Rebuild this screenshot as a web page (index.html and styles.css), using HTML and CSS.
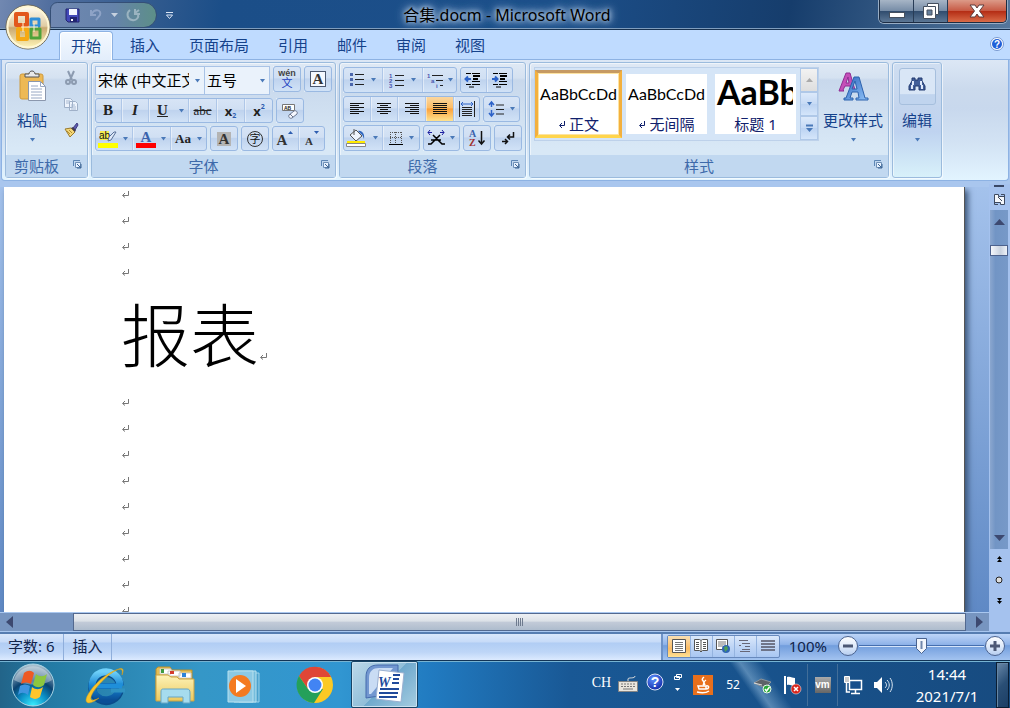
FILE: index.html
```html
<!DOCTYPE html>
<html lang="zh-CN">
<head>
<meta charset="utf-8">
<title>合集.docm - Microsoft Word</title>
<link rel="stylesheet" href="styles.css">
</head>
<body>
<svg class="defs" aria-hidden="true">
  <defs>
    <linearGradient id="gold" x1="0" y1="0" x2="0" y2="1"><stop offset="0" stop-color="#fffdf2"/><stop offset=".48" stop-color="#e0cba2"/><stop offset=".52" stop-color="#c9a870"/><stop offset="1" stop-color="#fff5b8"/></linearGradient>
    <linearGradient id="silver" x1="0" y1="0" x2="0" y2="1"><stop offset="0" stop-color="#ffffff"/><stop offset=".5" stop-color="#dfeafa"/><stop offset="1" stop-color="#b5cdf0"/></linearGradient>
    <linearGradient id="folder" x1="0" y1="0" x2="0" y2="1"><stop offset="0" stop-color="#fdf3b8"/><stop offset="1" stop-color="#ecc95e"/></linearGradient>
    <linearGradient id="blueA" x1="0" y1="0" x2="1" y2="1"><stop offset="0" stop-color="#2f67c0"/><stop offset="1" stop-color="#8fc2f7"/></linearGradient>
    <linearGradient id="ie" x1="0" y1="0" x2="0" y2="1"><stop offset="0" stop-color="#6fd0fa"/><stop offset=".5" stop-color="#1784d2"/><stop offset="1" stop-color="#0a4f97"/></linearGradient>
    <radialGradient id="orb" cx=".5" cy="1" r="1"><stop offset="0" stop-color="#3cf0ff"/><stop offset=".35" stop-color="#0b8ec6"/><stop offset=".6" stop-color="#0a4270"/><stop offset="1" stop-color="#b5c9d6"/></radialGradient>
    <radialGradient id="ball" cx=".4" cy=".3" r=".8"><stop offset="0" stop-color="#5d93ff"/><stop offset="1" stop-color="#0a1ea0"/></radialGradient>
  </defs>
  <symbol id="down" viewBox="0 0 7 4"><path d="M1 0h5L3.500 3.500z" fill="#4a79b8"/></symbol>
  <symbol id="launch" viewBox="0 0 9 9"><path d="M.5 6V.5H7" fill="none" stroke="#5d86b5"/><path d="M2.500 2.500h5v5h-5z" fill="#e8f2ff" stroke="#6e8fb5"/><path d="M4 4l4 4M8 4v4H4" fill="none" stroke="#3c6594"/></symbol>
  <symbol id="mark" viewBox="0 0 9 8"><path d="M7.500 1v4.500H2M4 3L1.500 5.500 4 7.500" fill="none" stroke="#777"/></symbol>
</svg>

<header class="titlebar">
  <button class="office" aria-label="Office">
    <svg viewBox="0 0 46 46"><circle cx="23" cy="23" r="22" fill="#e8e4d4" stroke="#6b6450"/><circle cx="23" cy="23" r="20.500" fill="url(#gold)" stroke="#fff7d4" stroke-width="2"/>
      <g fill="none" stroke-linejoin="round"><rect x="11" y="10" width="11" height="11" stroke="#e2571c" stroke-width="4"/><rect x="26" y="15" width="8" height="7" stroke="#2f8ed8" stroke-width="3"/><rect x="13" y="25" width="9" height="10" stroke="#f5a914" stroke-width="4"/><rect x="26" y="25" width="9" height="9" stroke="#4ea33a" stroke-width="3"/><path d="M18 18v10M16 23h17M29 19v9" stroke="#fff3d0" stroke-width="1"/></g></svg>
  </button>
  <div class="qat-area">
    <div class="qat">
      <button aria-label="保存"><svg width="16" height="16"><path d="M1 2h13v13H3l-2-2z" fill="#4349b8" stroke="#22256f"/><path d="M4 2h8v6H4z" fill="#f4f6ff"/><path d="M5 10h7v5H5z" fill="#22256f"/><path d="M6 12h2v2H6z" fill="#fff"/></svg></button>
      <button aria-label="撤销"><svg width="16" height="16"><path d="M3 3v5h5M3.500 7C7 1 14 3 12 8l-4 5" fill="none" stroke="#8ea3c6" stroke-width="2"/></svg></button>
      <button aria-label="撤销选项"><svg width="7" height="4"><path d="M0 0h7L3.500 4z" fill="#c6d1df"/></svg></button>
      <button aria-label="重复"><svg width="16" height="16"><path d="M10 2v5h5M10 6l4-3M5 3C1 6 2 12 7 13s7-3 6-6" fill="none" stroke="#9ab3c0" stroke-width="2"/></svg></button>
    </div>
    <button class="qat-more" aria-label="自定义快速访问工具栏"><svg width="9" height="9"><path d="M1 1.500h7M1.500 4h6l-3 3.500z" fill="none" stroke="#dbe6f5"/></svg></button>
  </div>
  <h1>合集.docm - Microsoft Word</h1>
  <div class="caption">
    <button aria-label="最小化"><svg width="20" height="20"><rect x="2.500" y="11.500" width="15" height="5" fill="#fff" stroke="#444f5e"/></svg></button>
    <button aria-label="还原"><svg width="20" height="20"><path d="M6.500 2.500h11v11h-3v4h-12v-12h4z" fill="#fff" stroke="#444f5e"/><path d="M6 9h5v5H6z" fill="#66809c" stroke="#444f5e"/><path d="M7 5.500h7.500v8" fill="none" stroke="#444f5e"/></svg></button>
    <button class="close" aria-label="关闭"><svg width="20" height="20"><path d="M3 4h5l2 3 2-3h5l-4.500 6 4.500 6h-5l-2-3-2 3H3l4.500-6z" fill="#fff" stroke="#5c3c3c"/></svg></button>
  </div>
</header>

<nav class="tabs">
  <button class="tab active">开始</button><button class="tab">插入</button><button class="tab">页面布局</button><button class="tab">引用</button><button class="tab">邮件</button><button class="tab">审阅</button><button class="tab">视图</button>
  <button class="help" aria-label="帮助"><svg width="14" height="14"><circle cx="7" cy="7" r="6.500" fill="#fff" stroke="#7798d0"/><circle cx="7" cy="7" r="5" fill="#2060d8"/><text x="7" y="11" text-anchor="middle" class="q">?</text></svg></button>
</nav>

<section class="ribbon">
  <div class="group">
    <div class="body clipboard">
      <button class="big"><svg width="32" height="34"><rect x="4" y="4" width="23" height="25" rx="2" fill="#eeb955" stroke="#cf9a3c"/><path d="M9 7V4h4c0-4 6-4 6 0h4v3z" fill="#e8e8e8" stroke="#555"/><path d="M12.500 11.500h12l5 5v14h-17z" fill="#fff" stroke="#8b97ad"/><path d="M24.500 11.500v5h5M15 16h7M15 19h11M15 22h11M15 25h11M15 28h11" fill="none" stroke="#98a8c4"/></svg><span>粘贴</span><svg class="dn"><use href="#down"/></svg></button>
      <div class="stack">
        <button aria-label="剪切"><svg width="16" height="16"><path d="M5 1l4 9M11 1L7 10" stroke="#8c9bb0" stroke-width="2"/><circle cx="5" cy="12" r="2" fill="none" stroke="#8c9bb0" stroke-width="2"/><circle cx="11" cy="12" r="2" fill="none" stroke="#8c9bb0" stroke-width="2"/></svg></button>
        <button aria-label="复制"><svg width="16" height="16"><path d="M1.500 2.500h6l2 2v7h-8zM6.500 5.500h6l2 2v7h-8z" fill="#edf3fc" stroke="#9fb0c8"/><path d="M3 5h4M3 7h3M8 9h4M8 11h5M8 13h5" stroke="#a9bad2"/></svg></button>
        <button aria-label="格式刷"><svg width="16" height="16"><path d="M14 1l1 2-3 5-2-2z" fill="#5d5bb0" stroke="#3d3b80"/><path d="M2 7l6-1 4 4-5 5z" fill="#f3d677" stroke="#9a7a2c"/><path d="M8 6l4 4 1-2-3-3z" fill="#443c50"/><path d="M4 9l3 3M6 8l3 3" stroke="#b6902f"/></svg></button>
      </div>
    </div>
    <div class="glabel"><span>剪贴板</span><button aria-label="剪贴板选项"><svg width="9" height="9"><use href="#launch"/></svg></button></div>
  </div>

  <div class="group">
    <div class="body rows font">
      <div class="row">
        <div class="combo"><div class="pick name"><select aria-label="字体"><option>宋体 (中文正文)</option></select><svg class="dn"><use href="#down"/></svg></div><div class="pick size"><select aria-label="字号"><option>五号</option></select><svg class="dn"><use href="#down"/></svg></div></div>
        <div class="strip"><button class="w28" aria-label="拼音指南"><svg width="20" height="24"><text x="10" y="9" text-anchor="middle" class="pinyin">wén</text><text x="10" y="20" text-anchor="middle" class="wen">文</text></svg></button></div>
        <div class="strip"><button class="w28" aria-label="字符边框"><svg width="18" height="18"><rect x="1.500" y="1.500" width="15" height="15" fill="#f4f8ff" stroke="#4b5870"/><text x="9" y="14" text-anchor="middle" class="serif-a">A</text></svg></button></div>
      </div>
      <div class="row">
        <div class="strip"><button class="w27 serif">B</button><button class="w27 serif it">I</button><button class="w40"><u class="serif">U</u><svg class="dn"><use href="#down"/></svg></button><button class="w28 strike">abc</button><button class="w28 script">x<sub>2</sub></button><button class="w28 script">x<sup>2</sup></button></div>
        <div class="strip"><button class="w28" aria-label="清除格式"><svg width="18" height="18"><path d="M1.500 2.500h12v6h-12z" fill="#fff" stroke="#777"/><text x="3" y="8" class="tiny">AB</text><path d="M8 13l5-4c2-1 4 1 3 3l-5 4c-2 1-4-1-3-3z" fill="#f6f8ff" stroke="#69748c"/><path d="M9 12l3 3" stroke="#69748c"/></svg></button></div>
      </div>
      <div class="row">
        <div class="strip"><button class="w38" aria-label="突出显示"><svg width="21" height="20"><path d="M2 2h9v9H2z" fill="#f6ee52"/><text x="1" y="10" class="ab">ab</text><path d="M18 3l-5 8-3 1 1-4 5-5z" fill="#dfe9f8" stroke="#587098"/><path d="M0 14h20v5H0z" fill="#ff0"/></svg><svg class="dn"><use href="#down"/></svg></button><button class="w38" aria-label="字体颜色"><svg width="21" height="22"><text x="10" y="14" text-anchor="middle" class="colour-a">A</text><path d="M0 15h20v5H0z" fill="red"/></svg><svg class="dn"><use href="#down"/></svg></button><button class="w36 case">Aa<svg class="dn"><use href="#down"/></svg></button></div>
        <div class="strip"><button class="w28" aria-label="字符底纹"><svg width="16" height="16"><path d="M1 1h14v14H1z" fill="#b4b4b4"/><text x="8" y="13" text-anchor="middle" class="serif-a">A</text></svg></button></div>
        <div class="strip"><button class="w28" aria-label="带圈字符"><svg width="18" height="18"><circle cx="9" cy="9" r="7.500" fill="none" stroke="#333"/><text x="9" y="13" text-anchor="middle" class="ring">字</text></svg></button></div>
        <div class="strip"><button class="w27" aria-label="增大字体"><svg width="20" height="20"><text x="7" y="16" text-anchor="middle" class="serif-a">A</text><path d="M13 5h5l-2.500-3z" fill="#2d5db0"/></svg></button><button class="w26" aria-label="缩小字体"><svg width="20" height="20"><text x="7" y="16" text-anchor="middle" class="small-a">A</text><path d="M12 2h5l-2.500 3z" fill="#2d5db0"/></svg></button></div>
      </div>
    </div>
    <div class="glabel"><span>字体</span><button aria-label="字体选项"><svg width="9" height="9"><use href="#launch"/></svg></button></div>
  </div>

  <div class="group">
    <div class="body rows para">
      <div class="row">
        <div class="strip"><button class="w40" aria-label="项目符号"><svg width="16" height="16"><path d="M1 1h3v3H1zM1 6h3v3H1zM1 11h3v3H1z" fill="#4a66ac"/><path d="M6 2.500h9M6 7.500h9M6 12.500h9" stroke="#222"/></svg><svg class="dn"><use href="#down"/></svg></button><button class="w40" aria-label="编号"><svg width="16" height="17"><text x="0" y="6" class="num">1</text><text x="0" y="11" class="num">2</text><text x="0" y="16" class="num">3</text><path d="M6 3.500h9M6 8.500h9M6 13.500h9" stroke="#222"/></svg><svg class="dn"><use href="#down"/></svg></button><button class="w34" aria-label="多级列表"><svg width="17" height="17"><text x="0" y="6" class="num">1</text><text x="4" y="11" class="num">a</text><text x="9" y="16" class="num">i</text><path d="M5 3.500h11M9 8.500h7M13 13.500h3" stroke="#222"/></svg><svg class="dn"><use href="#down"/></svg></button></div>
        <div class="strip"><button class="w27" aria-label="减少缩进"><svg width="18" height="16"><path d="M2 1.500h5M8 1.500h8M8 9.500h8M2 12.500h5M8 12.500h8M5 15h5" stroke="#000"/><path d="M9 4h7M9 7h5" stroke="#000" stroke-width="2"/><path d="M7 7H2M4 4.500L1.500 7 4 9.500" fill="none" stroke="#2c62c8" stroke-width="2"/></svg></button><button class="w26" aria-label="增加缩进"><svg width="18" height="16"><path d="M2 1.500h5M8 1.500h8M8 9.500h8M2 12.500h5M8 12.500h8M5 15h5" stroke="#000"/><path d="M9 4h7M9 7h5" stroke="#000" stroke-width="2"/><path d="M1 7h5M4 4.500L6.500 7 4 9.500" fill="none" stroke="#2c62c8" stroke-width="2"/></svg></button></div>
      </div>
      <div class="row">
        <div class="strip"><button class="w28" aria-label="左对齐"><svg width="16" height="14"><path d="M1 1.500h14M1 3.500h9M1 5.500h14M1 7.500h9M1 9.500h14M1 11.500h9" stroke="#111"/></svg></button><button class="w27" aria-label="居中"><svg width="16" height="14"><path d="M1 1.500h14M4 3.500h8M1 5.500h14M4 7.500h8M1 9.500h14M4 11.500h8" stroke="#111"/></svg></button><button class="w28" aria-label="右对齐"><svg width="16" height="14"><path d="M1 1.500h14M6 3.500h9M1 5.500h14M6 7.500h9M1 9.500h14M6 11.500h9" stroke="#111"/></svg></button><button class="w28 on" aria-label="两端对齐"><svg width="16" height="14"><path d="M1 1.500h14M1 3.500h14M1 5.500h14M1 7.500h14M1 9.500h14M1 11.500h14" stroke="#111"/></svg></button><button class="w26" aria-label="分散对齐"><svg width="18" height="16"><path d="M1.500 0v16M16.500 0v16M4 6.500h10M4 8.500h10M4 10.500h10M4 12.500h10M4 14.500h10" stroke="#222"/><path d="M3 3h12M5 1L3 3l2 2M13 1l2 2-2 2" fill="none" stroke="#2c62c8"/></svg></button></div>
        <div class="strip"><button class="w37" aria-label="行距"><svg width="17" height="18"><path d="M3.500 2v5M3.500 10v6M1 5l2.500-3L6 5M1 13l2.500 3L6 13" fill="none" stroke="#2c62c8" stroke-width="1.500"/><path d="M8 5h8M8 9.500h8M8 14h8" stroke="#222"/></svg><svg class="dn"><use href="#down"/></svg></button></div>
      </div>
      <div class="row">
        <div class="strip"><button class="w40" aria-label="底纹"><svg width="21" height="20"><path d="M4 7l6-5 6 6-6 5z" fill="#eff4fc" stroke="#555"/><path d="M8 1v6" stroke="#555"/><path d="M12 3c4-1 7 3 6 8-1-2-1-4-3-5z" fill="#2f66bd"/><path d="M1 13h18v2H1z" fill="#ffea00"/><path d="M.5 15.500h19v3H.5z" fill="#fff" stroke="#888"/></svg><svg class="dn"><use href="#down"/></svg></button><button class="w37" aria-label="边框"><svg width="16" height="16"><path d="M2 2.500h12M2 7.500h12M2.500 2v11M7.500 2v11M13.500 2v11" stroke="#555" stroke-dasharray="1 1"/><path d="M1 14.500h14" stroke="#000"/></svg><svg class="dn"><use href="#down"/></svg></button></div>
        <div class="strip"><button class="w37" aria-label="中文版式"><svg width="18" height="18"><path d="M1 15h3L13 6M6 6l9 9h3M4 11h10" fill="none" stroke="#000" stroke-width="1.500"/><path d="M1 3.500h4M3 1L1 3.500 3 6M17 3.500h-4M15 1l2 2.500L15 6" fill="none" stroke="#1d1fa0"/></svg><svg class="dn"><use href="#down"/></svg></button></div>
        <div class="strip"><button class="w28" aria-label="排序"><svg width="18" height="22"><text x="1" y="10" class="az">A</text><text x="1" y="19" class="az z">Z</text><path d="M13.500 4v12M10.500 13.500l3 3.500 3-3.500" fill="none" stroke="#111" stroke-width="1.500"/></svg></button></div>
        <div class="strip"><button class="w28" aria-label="显示编辑标记"><svg width="16" height="16"><path d="M13.500 2v5H8M10 4.500L7.500 7 10 9.500M2 11.500h5M5 9l2.500 2.500L5 14" fill="none" stroke="#111" stroke-width="1.500"/></svg></button></div>
      </div>
    </div>
    <div class="glabel"><span>段落</span><button aria-label="段落选项"><svg width="9" height="9"><use href="#launch"/></svg></button></div>
  </div>

  <div class="group">
    <div class="body styles">
      <div class="gallery">
        <button class="style chosen"><span class="sample">AaBbCcDd</span><span class="sname"><svg width="8" height="8"><path d="M6.500 1v4.500H2M4 3L1.500 5.500 4 8" fill="none" stroke="#10206c"/></svg>正文</span></button>
        <button class="style"><span class="sample">AaBbCcDd</span><span class="sname"><svg width="8" height="8"><path d="M6.500 1v4.500H2M4 3L1.500 5.500 4 8" fill="none" stroke="#10206c"/></svg>无间隔</span></button>
        <button class="style"><span class="sample h">AaBb</span><span class="sname">标题 1</span></button>
        <div class="spin"><button class="off" aria-label="上一行"><svg width="7" height="4"><path d="M0 4h7L3.500 0z" fill="#aaa"/></svg></button><button aria-label="下一行"><svg class="dn"><use href="#down"/></svg></button><button aria-label="更多样式"><svg width="9" height="9"><path d="M1 1.500h7" stroke="#4a79b8" stroke-width="2"/><path d="M1 4h7L4.500 8z" fill="#4a79b8"/></svg></button></div>
      </div>
      <button class="big"><svg width="32" height="34"><path d="M2 21L9 3h4l5 17h-4l-1-4H8l-2 4 1 1zM9 13h3l-1-6z" fill="#c44fb8" stroke="#8f2d92"/><path d="M7 30v-2h2L17 7h5l6 21h3v2H19v-2h3l-1-6h-6l-2 6h3v2zM15 19h5l-2-8z" fill="url(#blueA)" stroke="#2d62ad"/></svg><span>更改样式</span><svg class="dn"><use href="#down"/></svg></button>
    </div>
    <div class="glabel"><span>样式</span><button aria-label="样式选项"><svg width="9" height="9"><use href="#launch"/></svg></button></div>
  </div>

  <div class="group edit">
    <button class="big"><span class="tile"><svg width="18" height="16"><path d="M4 2h3v2h3V2h4v3l3 5v4h-6v-4H7v4H1v-4l3-5z" fill="#425f9a" stroke="#233b70"/><path d="M5 5v4M13 5v4M3 12h2M13 12h2M3 10h2M13 10h2" stroke="#dfe9fb" stroke-width="2"/></svg></span><span>编辑</span><svg class="dn"><use href="#down"/></svg></button>
  </div>
</section>

<main class="work">
  <div class="canvas">
    <article class="page">
      <p><svg class="mk"><use href="#mark"/></svg></p><p><svg class="mk"><use href="#mark"/></svg></p><p><svg class="mk"><use href="#mark"/></svg></p><p><svg class="mk"><use href="#mark"/></svg></p>
      <h2>报表<svg class="mk"><use href="#mark"/></svg></h2>
      <p><svg class="mk"><use href="#mark"/></svg></p><p><svg class="mk"><use href="#mark"/></svg></p><p><svg class="mk"><use href="#mark"/></svg></p><p><svg class="mk"><use href="#mark"/></svg></p><p><svg class="mk"><use href="#mark"/></svg></p><p><svg class="mk"><use href="#mark"/></svg></p><p><svg class="mk"><use href="#mark"/></svg></p><p><svg class="mk"><use href="#mark"/></svg></p><p><svg class="mk"><use href="#mark"/></svg></p>
    </article>
  </div>
  <div class="vscroll">
    <div class="split"></div>
    <button aria-label="标尺"><svg width="13" height="13"><path d="M1.500 1.500h4v2h6v8h-4v-2h-6z" fill="#f4f7fc" stroke="#3e4a60"/><path d="M5 4l4 4M8 1.500h3.500v3M1.500 8v3.500H5" fill="none" stroke="#3e4a60"/></svg></button>
    <div class="vtrack"><button aria-label="向上滚动"><svg width="11" height="6"><path d="M0 6h11L5.500 0z" fill="#3d4970"/></svg></button><div class="vthumb"></div><button class="end" aria-label="向下滚动"><svg width="11" height="6"><path d="M0 0h11L5.500 6z" fill="#3d4970"/></svg></button></div>
    <div class="browse">
      <button aria-label="前一页"><svg width="7" height="8"><path d="M1 4l2.500-3L6 4zM1 7l2.500-3L6 7z" fill="#000"/></svg></button>
      <button aria-label="选择浏览对象"><svg width="8" height="8"><circle cx="4" cy="4" r="3" fill="#ddd" stroke="#222"/></svg></button>
      <button aria-label="下一页"><svg width="7" height="8"><path d="M1 1l2.500 3L6 1zM1 4l2.500 3L6 4z" fill="#000"/></svg></button>
    </div>
  </div>
  <div class="hscroll"><button aria-label="向左滚动"><svg width="7" height="12"><path d="M7 0v12L0 6z" fill="#3d4970"/></svg></button><div class="hthumb"><svg width="8" height="8"><path d="M.5 0v8M2.500 0v8M4.500 0v8M6.500 0v8" stroke="#6f7b8e"/></svg></div><button class="right" aria-label="向右滚动"><svg width="7" height="12"><path d="M0 0v12l7-6z" fill="#3d4970"/></svg></button></div>
</main>

<footer class="status">
  <span class="cell">字数: 6</span><span class="cell">插入</span>
  <div class="views">
    <div class="viewset"><button class="on" aria-label="页面视图"><svg width="16" height="16"><path d="M1.500 1.500h13v13h-13z" fill="#fff" stroke="#555"/><path d="M4 4.500h8M4 6.500h8M4 8.500h8M4 10.500h8M4 12.500h8" stroke="#777"/></svg></button><button aria-label="阅读版式"><svg width="16" height="16"><path d="M1.500 1.500h5l1.500 1 1.500-1h5v11h-5L8 14l-1.500-1.500h-5z" fill="#fff" stroke="#555"/><path d="M8 3v11M3 4.500h3M3 6.500h3M3 8.500h3M3 10.500h3M10 4.500h3M10 6.500h3M10 8.500h3M10 10.500h3" stroke="#555"/></svg></button><button aria-label="Web 版式"><svg width="16" height="16"><path d="M1.500 1.500h11v10h-11z" fill="#fff" stroke="#555"/><path d="M3 4h8M3 6h8M3 8h5" stroke="#777"/><circle cx="11" cy="11" r="4" fill="#2f65b2"/><path d="M9 9l3-1 1 3-3 3z" fill="#4fa052"/></svg></button><button aria-label="大纲视图"><svg width="16" height="16"><path d="M2 2.500h9M5 5.500h8M8 8.500h5M5 11.500h8M3 13.500h10M2 7.500h2" stroke="#667"/></svg></button><button aria-label="普通视图"><svg width="16" height="16"><path d="M1 3h14M1 6h14M1 9h14M1 12h14" stroke="#556" stroke-width="1.500"/></svg></button></div>
    <button class="pct">100%</button>
    <button class="zoombtn" aria-label="缩小"><svg width="22" height="22"><circle cx="11" cy="11" r="9.500" fill="url(#silver)" stroke="#4b6390"/><path d="M6 11h10" stroke="#4c5875" stroke-width="3"/></svg></button><input class="zoom" type="range" min="0" max="100" value="50" aria-label="显示比例"><button class="zoombtn" aria-label="放大"><svg width="22" height="22"><circle cx="11" cy="11" r="9.500" fill="url(#silver)" stroke="#4b6390"/><path d="M6 11h10M11 6v10" stroke="#4c5875" stroke-width="3"/></svg></button>
  </div>
</footer>

<footer class="taskbar">
  <button class="start" aria-label="开始菜单"><svg width="44" height="44"><circle cx="22" cy="22" r="21" fill="url(#orb)" stroke="#a9d4e4"/><path d="M3 17a20 20 0 0 1 38 0c-8 6-28 6-38 0z" fill="#fff" opacity=".35"/><path d="M13 10c4-3 7-3 10 0l-3 11c-3-2-6-2-10 0z" fill="#ee5a24"/><path d="M25 11c4 3 7 3 11 0l-3 11c-4 3-7 3-11 0z" fill="#8dc63f"/><path d="M9 23c4-2 7-2 10 0l-2 9c-4-3-7-3-10 0z" fill="#3f95e0"/><path d="M21 24c4 3 7 3 11 0l-3 10c-4 3-7 2-10 0z" fill="#fdc52c"/></svg></button>
  <button class="task" aria-label="Internet Explorer"><svg width="42" height="42"><path d="M35 22H13" stroke="#0a5aa3" stroke-width="6"/><path d="M36 25A14 14 0 1 1 35.500 19L36 22" fill="none" stroke="#0a4c8c" stroke-width="8"/><path d="M35 27A14 14 0 1 1 36 22" fill="none" stroke="url(#ie)" stroke-width="7"/><path d="M38 22H13" stroke="#1f8fd9" stroke-width="5"/><path d="M27 24.500h14v4H27z" fill="#3092c2"/><path d="M38 11c3-7 0-8-6-5C18 11 3 28 2 36c0 5 7 3 13-2-6 3-9 3-8-1C9 25 25 9 33 6c5-2 6 0 5 5z" fill="#fac52c" stroke="#d39a18" stroke-width=".5"/></svg></button>
  <button class="task" aria-label="资源管理器"><svg width="42" height="42"><path d="M2 36V5l2-2h12l2 3h20v30z" fill="#e4bf56" stroke="#b98e2c"/><path d="M6 5h11v5H6zM14 7h12v5H14zM25 9h12v5H25z" fill="#fff" stroke="#ccc"/><path d="M7 5h3v4H7z" fill="#3d9c41"/><path d="M16 7h4v3h-4z" fill="#d43b2d"/><path d="M28 9h4v4h-4z" fill="#2d83d8"/><path d="M2 11h12l3 2h6l2 2h15v22H2z" fill="url(#folder)" stroke="#cba243"/><path d="M7 28c0-3 1-3 3-3h23c2 0 3 1 3 4v10h-7v-6H14v6H7z" fill="#a6dcee" stroke="#66a6c5"/></svg></button>
  <button class="task" aria-label="媒体播放器"><svg width="42" height="42"><path d="M15 9h20v29H15z" fill="#4ba2cd" stroke="#9cd3ea"/><path d="M10 7h22v31H10z" fill="#75bddd" stroke="#b8e1ef"/><path d="M4 7h25v31H4z" fill="#8cc9e4" stroke="#b8e1ef"/><circle cx="16" cy="22" r="11" fill="#f47a20"/><path d="M12 15v14l10-7z" fill="#fff"/></svg></button>
  <button class="task" aria-label="Chrome"><svg width="42" height="42"><circle cx="21" cy="21" r="18" fill="#fbc924"/><path d="M21 13h16a18 18 0 0 0-32-1l9 13z" fill="#df4636"/><path d="M5 12a18 18 0 0 0 15 27l9-14-15 0z" fill="#24a05a"/><circle cx="21" cy="21" r="8" fill="#fff"/><circle cx="21" cy="21" r="6.500" fill="#4284f3"/></svg></button>
  <button class="task current" aria-label="Word"><svg width="44" height="44"><path d="M3 35V14C3 6 7 2 15 2h20v28z" fill="#7297d0" stroke="#456bad"/><path d="M6 31V15c0-7 4-10 10-10h14L8 31z" fill="#c9dcf4"/><path d="M16 7l25 3-3 29-25-3z" fill="#fff" stroke="#9ab0d1"/><text x="15" y="24" class="w">W</text><path d="M30 12h7M30 16h6M29 20h7M17 26h19M16 30h19M16 34h18" stroke="#204a9b" stroke-width="2"/></svg></button>
  <div class="tray">
    <span class="t27 ch">CH</span>
    <span class="t27"><svg width="20" height="18"><path d="M10 5V3c0-2 7 0 7-3" fill="none" stroke="#ddd"/><path d="M.5 5.500h19v10H.5z" fill="#e9e5dd" stroke="#858585"/><path d="M3 8h14M3 10.500h14" stroke="#777" stroke-dasharray="2 1"/><path d="M5 13h10" stroke="#777"/></svg></span>
    <span class="t27"><svg width="18" height="26"><circle cx="9" cy="10" r="8" fill="url(#ball)" stroke="#dde5f5"/><text x="9" y="15" text-anchor="middle" class="tray-q">?</text></svg></span>
    <span class="t20"><svg width="10" height="24"><path d="M3.500 1.500h5v3h-5zM1.500 3.500h5v3h-5z" fill="#174f8c" stroke="#fff"/><path d="M2 15h5l-2.500 3z" fill="#fff"/></svg></span>
    <span class="t30"><svg width="20" height="20"><path d="M0 0h20v20H0z" fill="#e86f1c"/><path d="M11 2c-5 4 3 4-1 8M13 5c-3 2-2 3-1 5M5 11h8v3H6zM13 11c4-1 3 3 0 3M4 17c4 1 9 1 12-1" fill="none" stroke="#fff" stroke-width="1.500"/></svg></span>
    <span class="t30">52</span>
    <span class="t30"><svg width="20" height="20"><path d="M1 8l7-4 10 3-6 6z" fill="#5c6268" stroke="#8b949c"/><path d="M1 8l8 2" stroke="#ddd"/><circle cx="14" cy="14" r="4" fill="#29a83a" stroke="#e6f6e8"/><path d="M12 14l1.500 2 3-4" fill="none" stroke="#fff" stroke-width="1.500"/></svg></span>
    <span class="t30 bar"><svg width="20" height="20"><path d="M2 1v18" stroke="#fff" stroke-width="2"/><path d="M4 2c4-1 5 1 8 1v8c-3 0-5-2-8-1z" fill="#fff"/><circle cx="13" cy="14" r="5" fill="#d8261c" stroke="#fff" stroke-width=".5"/><path d="M11 12l4 4M15 12l-4 4" stroke="#fff" stroke-width="1.500"/></svg></span>
    <span class="t30 bar"><span class="vm">vm</span></span>
    <span class="t30"><svg width="20" height="20"><path d="M6.500 5.500h12v9h-12z" fill="#174f8c" stroke="#fff" stroke-width="1.500"/><path d="M12.500 15v3M8 18.500h9M3.500 8v9H7" fill="none" stroke="#fff" stroke-width="1.500"/><path d="M1.500 1.500h5v6h-5z" fill="#ccc" stroke="#fff"/></svg></span>
    <span class="t30"><svg width="20" height="20"><path d="M1 7h3l5-5v16l-5-5H1z" fill="#fff"/><path d="M12 7c2 2 2 4 0 6M14 5c3 3 3 7 0 10M17 3c3 4 3 10 0 14" fill="none" stroke="#dbe7f2"/></svg></span>
    <time class="clock"><span>14:44</span><span>2021/7/1</span></time>
  </div>
  <button class="desk" aria-label="显示桌面"></button>
</footer>
</body>
</html>
```

FILE: styles.css
```css
* { box-sizing: border-box; }

html, body { height: 100%; }

body {
  margin: 0;
  display: flex;
  flex-direction: column;
  overflow: hidden;
  background: #a9c6ee;
  font: 15px/20px "Noto Sans", "Noto Sans CJK SC", sans-serif;
  color: #15428b;
}

button {
  display: flex;
  align-items: center;
  justify-content: center;
  padding: 0;
  border: 0;
  background: none;
  color: inherit;
  font: inherit;
}

svg { display: block; flex: none; }
.defs { position: absolute; width: 0; height: 0; }
.dn { width: 7px; height: 4px; }

/* Title bar */
.titlebar {
  position: relative;
  flex: none;
  height: 30px;
  display: grid;
  grid-template-columns: 1fr auto 1fr;
  align-items: start;
  background: linear-gradient(100deg, #7188b1 0, #526f9f 50px, #315a8e 150px, #1b4e88 220px, #1c4f8a 55%, #163d6c 78%, #55779c 100%);
  border-bottom: 1px solid #17304d;
  box-shadow: inset 0 -1px #7f9dbd;
}
.office {
  position: absolute;
  left: 5px;
  top: 4px;
  width: 46px;
  height: 46px;
  z-index: 1;
}
.office svg { width: 46px; height: 46px; }
.qat-area { display: flex; align-items: center; padding: 2px 0 0 50px; }
.qat {
  display: flex;
  align-items: center;
  gap: 7px;
  width: 107px;
  height: 26px;
  padding-left: 14px;
  border: 1px solid #354f76;
  border-radius: 8px 14px 14px 0;
  background: linear-gradient(90deg, #7088b1, #6583aa 60%, #5d8f88);
}
.qat-more { margin-left: 8px; }
.titlebar h1 {
  margin: 0;
  padding: 5px 0 0 4px;
  font-size: 16px;
  line-height: 20px;
  font-weight: 400;
  color: #000;
  text-shadow: 0 0 5px #d5e4f5, 0 0 8px #c0d5ec, 0 0 12px #a9c4e3;
}
.caption {
  justify-self: end;
  display: flex;
  margin-right: 3px;
  height: 23px;
  border: 1px solid #1c2c42;
  border-top: 0;
  border-radius: 0 0 5px 5px;
  box-shadow: 0 0 0 1px #98adc4;
  overflow: hidden;
}
.caption button {
  width: 34px;
  height: 22px;
  border-right: 1px solid #283c56;
  background: linear-gradient(#a7b5c6, #778da7 48%, #2f4b6d 50%, #5c7795);
}
.caption .close { width: 58px; border: 0; background: linear-gradient(#dc9a88, #c75b46 48%, #b32b13 50%, #d96b48); }

/* Ribbon tabs */
.tabs {
  flex: none;
  display: flex;
  gap: 5px;
  height: 30px;
  padding: 1px 6px 0 59px;
  background: #bfdbff;
  border-bottom: 1px solid #8db2e3;
}
.tab { height: 28px; padding: 0 12px; }
.tab.active {
  height: 30px;
  padding: 0 11px 2px;
  border: 1px solid #8db2e3;
  border-bottom: 0;
  border-radius: 4px 4px 0 0;
  background: linear-gradient(#f4f9ff, #e2edfb);
  box-shadow: inset 0 0 0 1px #fff;
}
.help { margin-left: auto; height: 26px; }
.q { font: bold 10px "Liberation Sans", sans-serif; fill: #fff; }

/* Ribbon */
.ribbon {
  flex: none;
  display: flex;
  gap: 3px;
  margin: 0 1px;
  padding: 2px 3px;
  border: 1px solid #8db2e3;
  border-top: 0;
  border-radius: 0 0 4px 4px;
  background: linear-gradient(#dce7f5, #cbdaed 24%, #c8d8ed 40%, #d3e3f4 70%, #e2f4ff);
}
.group {
  display: flex;
  flex-direction: column;
  height: 116px;
  border: 1px solid #9bbbdd;
  border-radius: 3px;
  box-shadow: inset 1px 1px rgba(255,255,255,.5), 1px 1px rgba(255,255,255,.6);
  background: linear-gradient(#dfe9f5, #d5e2f1 13%, #c8d8ec 15%, #d8e8f6 75%);
}
.body { flex: 1; min-height: 0; }
.glabel {
  display: grid;
  grid-template-columns: 1fr 20px;
  height: 22px;
  background: #c1d8f0;
  color: #3e6aaa;
  text-align: center;
  line-height: 22px;
}
.glabel button { height: 18px; }

.big {
  flex-direction: column;
  justify-content: flex-start;
  line-height: 20px;
}
.big .dn { margin-top: 8px; }
.clipboard { display: flex; padding: 7px 8px 0 10px; gap: 15px; }
.clipboard .big span, .styles .big span { margin-top: 6px; }
.stack { display: flex; flex-direction: column; gap: 10px; }

.rows { display: flex; flex-direction: column; gap: 3px; padding: 3px 3px 0; }
.rows.para { padding-top: 4px; }
.row { display: flex; align-items: flex-start; gap: 3px; }
.strip {
  display: flex;
  height: 26px;
  outline: 1px solid #9ab9e2;
  outline-offset: -1px;
  border-radius: 3px;
  background: linear-gradient(#d8e5f6, #d0dff3 45%, #bfd3ee 50%, #d2e3f7);
  color: #222;
}
.font .row + .row .strip { height: 25px; }
.strip button { gap: 5px; height: 100%; border-right: 1px solid #afc7e8; box-shadow: inset 1px 0 rgba(255,255,255,.45); }
.strip button:last-child { border-right: 0; }
.w26 { width: 26px; } .w27 { width: 27px; } .w28 { width: 28px; }
.w34 { width: 34px; } .w36 { width: 36px; } .w37 { width: 37px; }
.w38 { width: 38px; } .w40 { width: 40px; }
.strip .w34, .strip .w38 { gap: 3px; }
.strip .w37 { gap: 4px; }
.strip .on { background: linear-gradient(#fbd9a4, #fdbd67 45%, #fba23d 50%, #fee797); }

.combo { display: flex; height: 29px; }
.pick { display: grid; border: 1px solid #a9c3e6; background: #eaf2fb; align-items: center; }
.pick.name { width: 110px; }
.pick.size { width: 65px; border-left: 0; }
.pick select {
  grid-area: 1 / 1;
  appearance: none;
  width: 100%;
  height: 27px;
  padding: 0 15px 2px 2px;
  border: 0;
  background: none;
  font: inherit;
  color: #000;
}
.pick .dn { grid-area: 1 / 1; justify-self: end; margin-right: 3px; }

.serif { font: bold 15px "Liberation Serif", serif; }
.it { font-style: italic; }
.w40 u.serif { margin: 0 5px; }
.strike { font: 13px "Liberation Serif", serif; text-decoration: line-through; }
.strip .script { gap: 0; font: bold 13px "Noto Sans", sans-serif; }
.script sub, .script sup { font-size: 7px; line-height: 8px; color: #2d5db0; }
.script sub { align-self: flex-end; padding-bottom: 3px; }
.script sup { align-self: flex-start; padding-top: 5px; }
.case { font: bold 13px "Liberation Serif", serif; }
.serif-a { font: bold 15px "Liberation Serif", serif; fill: #333; }
.small-a { font: bold 11px "Liberation Serif", serif; fill: #333; }
.colour-a { font: bold 15px "Liberation Serif", serif; fill: #3a63ad; }
.ab { font: 10px "Liberation Sans", sans-serif; fill: #111; }
.tiny { font: bold 5px "Liberation Sans", sans-serif; fill: #222; }
.pinyin { font: bold 9px "Liberation Sans", sans-serif; fill: #444; }
.wen { font: 11px "Noto Sans CJK SC", sans-serif; fill: #1d3fc0; }
.ring { font: 11px "Noto Sans CJK SC", sans-serif; fill: #111; }
.num { font: bold 6px "Liberation Sans", sans-serif; fill: #4a55ae; }
.az { font: bold 10px "Liberation Serif", serif; fill: #3b62ac; }
.az.z { fill: #a03030; }

/* Style gallery */
.styles { display: flex; gap: 4px; padding: 4px 5px 0 4px; }
.styles .big { padding-top: 3px; }
.gallery {
  display: flex;
  height: 74px;
  width: 285px;
  border: 1px solid #bdd1ea;
  background: #d5e5f7;
}
.style {
  flex: 1;
  min-width: 0;
  flex-direction: column;
  justify-content: flex-end;
  margin: 2px 0;
  height: 68px;
  border: 4px solid transparent;
  background: #fff padding-box;
  color: #000;
}
.style.chosen {
  border: 3px solid #f3b03e;
  border-top-color: #c69a63;
  border-bottom-color: #ffd54c;
  box-shadow: inset 0 0 0 1px #fde3a0;
  padding-bottom: 1px;
}
.sample { font: 16px/20px Lato, sans-serif; padding-bottom: 10px; }
.sample.h { align-self: stretch; overflow: hidden; padding: 0 0 5px 2px; margin-right: 3px; font-size: 34px; line-height: 36px; font-weight: 700; text-align: left; }
.sname { display: flex; align-items: center; gap: 3px; line-height: 20px; color: #10206c; }
.spin { width: 18px; display: flex; flex-direction: column; flex: none; }
.spin button { flex: 1; border: 1px solid #afc8e8; background: linear-gradient(#dce9fa, #c6daf5 50%, #bcd3f2 51%, #d4e5fa); }
.spin .off { background: linear-gradient(#f2f2f2, #dedede); }

.edit { width: 50px; background: linear-gradient(#cfdef1, #c3d5ee 40%, #bfd3f0 60%, #d8f1fa); align-items: center; padding-top: 5px; }
.tile {
  display: flex;
  align-items: center;
  justify-content: center;
  width: 37px;
  height: 37px;
  margin-bottom: 5px;
  border: 1px solid #a6bfdd;
  border-radius: 3px;
  padding-bottom: 6px;
  background: linear-gradient(#d9e6f6 72%, #c0d4ee 73%);
}

/* Document area */
.work {
  flex: 1;
  min-height: 0;
  display: grid;
  grid-template: 1fr 20px / 1fr 21px;
  margin-top: 3px;
}
.canvas {
  min-height: 0;
  overflow: hidden;
  margin-top: 3px;
  padding: 0 24px 0 4px;
  background: linear-gradient(#a4c2ec, #5f89c5);
}
.page {
  height: 100%;
  overflow: hidden;
  padding-left: 117px;
  background: #fff;
  border-right: 1px solid #555;
  box-shadow: 3px 3px 6px #3a5375;
}
.page p { margin: 0; height: 26px; padding-top: 8px; }
.page p:first-child { height: 21px; padding-top: 3px; }
.mk { width: 9px; height: 8px; }
.page h2 {
  display: flex;
  align-items: flex-end;
  margin: 0;
  height: 104px;
  padding-bottom: 8px;
  font-size: 69px;
  line-height: 100px;
  font-weight: 300;
  font-family: "Noto Sans CJK SC", sans-serif;
  color: #000;
}
.page h2 .mk { margin-bottom: 22px; }

.vscroll { grid-row: 1 / 3; grid-column: 2; display: flex; flex-direction: column; align-items: center; padding-right: 1px; background: #a5c2ee; }
.split { width: 10px; height: 2px; background: #3a4866; margin: 1px 0 6px; }
.vtrack {
  flex: 1;
  align-self: stretch;
  display: flex;
  flex-direction: column;
  align-items: center;
  margin: 4px 1px 0;
  padding: 9px 0 8px;
  background: linear-gradient(90deg, #8ba7cf, #7295c5 30%, #7799c8);
}
.vthumb {
  width: 18px;
  height: 11px;
  margin-top: 20px;
  border: 1px solid #4d628d;
  background: linear-gradient(90deg, #f5f7fb, #c9d2df 60%, #eef2f8);
}
.end { margin-top: auto; }
.browse { display: flex; flex-direction: column; align-items: center; gap: 13px; padding: 6px 0 27px; }

.hscroll {
  display: flex;
  align-items: center;
  padding: 0 6px;
  border-top: 1px solid #a9c7ef;
  border-bottom: 1px solid #a9c7ef;
  background: #7795c0;
}
.hthumb {
  flex: 1;
  display: flex;
  align-items: center;
  justify-content: center;
  align-self: stretch;
  margin: 0 10px 0 60px;
  border: 1px solid #53698f;
  background: linear-gradient(#edf0f4, #dce1e7 45%, #c3cbd8 50%, #aebccd);
}

/* Status bar */
.status {
  flex: none;
  height: 28px;
  display: flex;
  align-items: stretch;
  border-top: 2px solid #567db1;
  background: linear-gradient(#d9e7fb, #c7dbf8 30%, #b1cdf4 35%, #bed6f7 70%, #dceaff);
  color: #10244b;
  line-height: 24px;
}
.cell { padding: 0 8px 0 9px; border-right: 1px solid #8faedb; }
.cell:first-child { padding-left: 8px; }
.views {
  margin-left: auto;
  display: flex;
  align-items: center;
  padding: 0 0 2px 4px;
  border-left: 2px solid #6e92c7;
  background: linear-gradient(#bdd5f8, #8fb3e9 40%, #729edd 45%, #a3c3f0);
}
.viewset { display: flex; height: 23px; border: 1px solid #6789bd; border-radius: 2px; background: linear-gradient(#dae8fb, #bfd5f5 50%, #a9c7f2); }
.viewset button { width: 22px; border-right: 1px solid #94b3df; }
.viewset button:last-child { border: 0; }
.viewset .on { width: 23px; background: linear-gradient(#f9dfb4, #fbbb64 60%, #fee296); }
.pct { padding: 0 10px 0 9px; }
.zoombtn { width: 22px; margin-right: 4px; }
.zoom { appearance: none; width: 125px; height: 22px; margin: 0 0 0 -4px; background: linear-gradient(transparent 10px, #456faf 10px, #456faf 11px, #d5e5fb 11px, #d5e5fb 12px, transparent 12px); }
.zoom::-webkit-slider-thumb {
  appearance: none;
  width: 11px;
  height: 16px;
  background: url("data:image/svg+xml,%3Csvg xmlns='http://www.w3.org/2000/svg' width='11' height='16'%3E%3Cpath d='M.5.5h10v10l-5 5-5-5z' fill='%23f2f6fc' stroke='%23496390'/%3E%3Cpath d='M5.5 3v8' stroke='%237087ac' stroke-width='2'/%3E%3C/svg%3E");
}

/* Taskbar */
.taskbar {
  flex: none;
  height: 48px;
  display: flex;
  align-items: center;
  border-top: 1px solid #123456;
  box-shadow: inset 0 1px #76b3d2;
  background: linear-gradient(55deg, transparent 0 73%, rgba(180,215,240,0) 73%, rgba(180,215,240,.4) 74%, transparent 76%), linear-gradient(90deg, #226489, #237aa4 50px, #3597c7 200px, #3196d1 340px, #217bc1 430px, #195895 570px, #174b80 100%);
  color: #fff;
}
.start { width: 66px; }
.task { width: 70px; height: 47px; padding-left: 7px; }
.task.current {
  width: 67px;
  margin-left: 5px;
  padding: 0;
  border: 1px solid #164466;
  border-radius: 2px;
  box-shadow: inset 0 0 0 1px #c9e1f0;
  background: linear-gradient(135deg, #bcd9ea, #91bed9 50%, #70a9cd 51%, #a5cde1);
}
.w { font: italic bold 14px "Liberation Serif", serif; fill: #204a9b; }
.tray { margin-left: auto; display: flex; align-items: center; }
.tray > span { display: flex; align-items: center; justify-content: center; font-size: 12px; }
.tray .ch { font: 14px/16px "Liberation Serif", serif; padding: 0 0 4px 2px; }
.t20 { width: 20px; } .t27 { width: 27px; } .t30 { width: 30px; }
.bar { border-right: 1px solid #426e99; height: 42px; }
.vm { width: 16px; height: 16px; background: linear-gradient(#aaa, #666); font: bold 10px/15px "Liberation Sans", sans-serif; text-align: center; }
.tray-q { font: bold 14px "Liberation Sans", sans-serif; fill: #fff; }
.clock { width: 98px; display: flex; flex-direction: column; text-align: center; line-height: 22px; font-size: 15px; }
.desk { width: 13px; height: 46px; margin-right: 1px; border: 1px solid #091d33; box-shadow: inset 1px 1px #6687a5; background: linear-gradient(135deg, #6a89a9, #294e75 50%, #1b3e65); }
```
